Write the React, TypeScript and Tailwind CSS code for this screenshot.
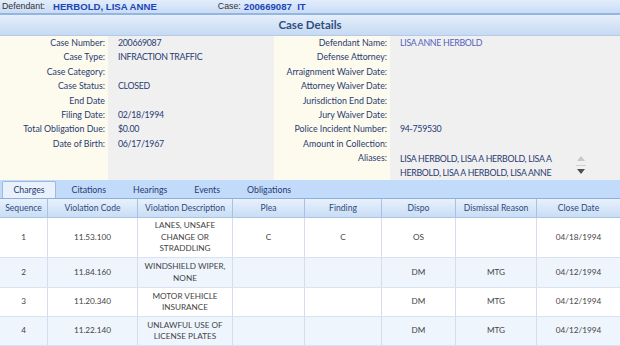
import React from "react";

const leftFields: [string, string][] = [
  ["Case Number:", "200669087"],
  ["Case Type:", "INFRACTION TRAFFIC"],
  ["Case Category:", ""],
  ["Case Status:", "CLOSED"],
  ["End Date", ""],
  ["Filing Date:", "02/18/1994"],
  ["Total Obligation Due:", "$0.00"],
  ["Date of Birth:", "06/17/1967"],
];

const rightFields: [string, string][] = [
  ["Defendant Name:", "LISA ANNE HERBOLD"],
  ["Defense Attorney:", ""],
  ["Arraignment Waiver Date:", ""],
  ["Attorney Waiver Date:", ""],
  ["Jurisdiction End Date:", ""],
  ["Jury Waiver Date:", ""],
  ["Police Incident Number:", "94-759530"],
  ["Amount in Collection:", ""],
];

const tabs = ["Charges", "Citations", "Hearings", "Events", "Obligations"];

const columns = [
  { name: "Sequence", w: "w-[48px]" },
  { name: "Violation Code", w: "w-[90px]" },
  { name: "Violation Description", w: "w-[95px]" },
  { name: "Plea", w: "w-[72px]" },
  { name: "Finding", w: "w-[77px]" },
  { name: "Dispo", w: "w-[74px]" },
  { name: "Dismissal Reason", w: "w-[81px]" },
  { name: "Close Date", w: "flex-1" },
];

const charges = [
  { seq: "1", code: "11.53.100", desc: "LANES, UNSAFE CHANGE OR STRADDLING", plea: "C", finding: "C", dispo: "OS", reason: "", date: "04/18/1994", h: "h-[40px]" },
  { seq: "2", code: "11.84.160", desc: "WINDSHIELD WIPER, NONE", plea: "", finding: "", dispo: "DM", reason: "MTG", date: "04/12/1994", h: "h-[30px]" },
  { seq: "3", code: "11.20.340", desc: "MOTOR VEHICLE INSURANCE", plea: "", finding: "", dispo: "DM", reason: "MTG", date: "04/12/1994", h: "h-[29px]" },
  { seq: "4", code: "11.22.140", desc: "UNLAWFUL USE OF LICENSE PLATES", plea: "", finding: "", dispo: "DM", reason: "MTG", date: "04/12/1994", h: "h-[29px]" },
];

const App: React.FC = () => {
  return (
    <div className="w-[620px] h-[346px] overflow-hidden bg-white font-['Lato',sans-serif]">
      {/* top bar */}
      <div className="h-[13px] flex items-center bg-gradient-to-b from-[#e2edfb] to-[#c9dcf5] text-[8.8px] font-['Liberation_Sans',sans-serif] leading-none">
        <span className="pl-[2px] text-[#333]">Defendant:</span>
        <span className="pl-[8px] font-bold text-[#1d45b5] text-[9.6px]">HERBOLD, LISA ANNE</span>
        <span className="pl-[61px] text-[#333]">Case:</span>
        <span className="pl-[3px] font-bold text-[#1d45b5] text-[9.6px]">200669087&nbsp;&nbsp;IT</span>
      </div>
      <div className="h-[2px] bg-[#93b5df]" />

      {/* case details header */}
      <div className="h-[21px] flex items-center justify-center bg-gradient-to-b from-[#e6effb] to-[#c6daf3] border-b border-[#b4cbe8]">
        <span className="text-[11.5px] font-bold text-[#2f4f80]">Case Details</span>
      </div>

      {/* details */}
      <div className="h-[144px] flex text-[8.8px] leading-[14.4px] text-[#283a70]">
        <div className="w-[108px] bg-[#fdfbee] text-right pr-[3px]">
          {leftFields.map(([l]) => (
            <div key={l} className="h-[14.4px] whitespace-nowrap">{l}</div>
          ))}
        </div>
        <div className="w-[166px] bg-[#f0f0f0] pl-[10px] tracking-[-0.3px]">
          {leftFields.map(([l, v]) => (
            <div key={l} className="h-[14.4px] whitespace-nowrap">{v}</div>
          ))}
        </div>
        <div className="w-[116px] bg-[#fdfbee] text-right pr-[3px]">
          {rightFields.map(([l]) => (
            <div key={l} className="h-[14.4px] whitespace-nowrap">{l}</div>
          ))}
          <div className="h-[14.4px]">Aliases:</div>
        </div>
        <div className="flex-1 bg-[#f0f0f0] pl-[10px] tracking-[-0.3px]">
          {rightFields.map(([l, v], i) => (
            <div key={l} className={`h-[14.4px] whitespace-nowrap ${i === 0 ? "text-[#5060c0]" : ""}`}>{v}</div>
          ))}
          <div className="flex pt-[1px]">
            <div className="w-[160px] leading-[14px]">
              LISA HERBOLD, LISA A HERBOLD, LISA A HERBOLD, LISA A HERBOLD, LISA ANNE
            </div>
            <div className="ml-[15px] mt-[4px] flex flex-col items-center w-[12px]">
              <svg width="8" height="5" viewBox="0 0 8 5"><path d="M4 0 L8 5 L0 5 Z" fill="#c8c8c8" /></svg>
              <div className="w-[10px] h-px bg-[#d0d0d0] mt-[4px]" />
              <svg width="8" height="5" viewBox="0 0 8 5" className="mt-[3px]"><path d="M0 0 L8 0 L4 5 Z" fill="#505050" /></svg>
            </div>
          </div>
        </div>
      </div>

      {/* tabs */}
      <div className="h-[18px] bg-[#c2dbfb] flex items-end pl-[2px] text-[8.8px] text-[#283a70]">
        {tabs.map((t, i) => (
          <div
            key={t}
            className={
              i === 0
                ? "w-[54px] h-[17px] mr-[2px] flex items-center justify-center bg-[#e9f2fc] border border-b-0 border-[#9fb9db] rounded-t-[2px]"
                : "h-[17px] flex items-center px-[13.5px]"
            }
          >
            {t}
          </div>
        ))}
      </div>

      {/* table header */}
      <div className="h-[20px] flex bg-gradient-to-b from-[#e8f1fc] to-[#c9ddf5] border-t border-[#8fb0da] border-b border-b-[#a9c3e4] text-[8.6px] text-[#2d4a7c]">
        {columns.map((c, i) => (
          <div
            key={c.name}
            className={`${c.w} flex items-center justify-center whitespace-nowrap ${i < columns.length - 1 ? "border-r border-[#a8c1e2]" : ""}`}
          >
            {c.name}
          </div>
        ))}
      </div>

      {/* table body */}
      <div className="text-[8.2px] text-[#444] leading-[11.5px]">
        {charges.map((r, ri) => {
          const cells = [r.seq, r.code, r.desc, r.plea, r.finding, r.dispo, r.reason, r.date];
          return (
            <div
              key={r.seq}
              className={`${r.h} flex border-b border-[#d9e2f0] ${ri % 2 === 1 ? "bg-[#eef5fd]" : "bg-white"}`}
            >
              {cells.map((v, i) => (
                <div
                  key={i}
                  className={`${columns[i].w} flex items-center justify-center text-center ${i === 2 ? "px-[5px]" : ""} ${i < cells.length - 1 ? "border-r border-[#d6dcee]" : ""}`}
                >
                  {v}
                </div>
              ))}
            </div>
          );
        })}
      </div>
    </div>
  );
};

export default App;
